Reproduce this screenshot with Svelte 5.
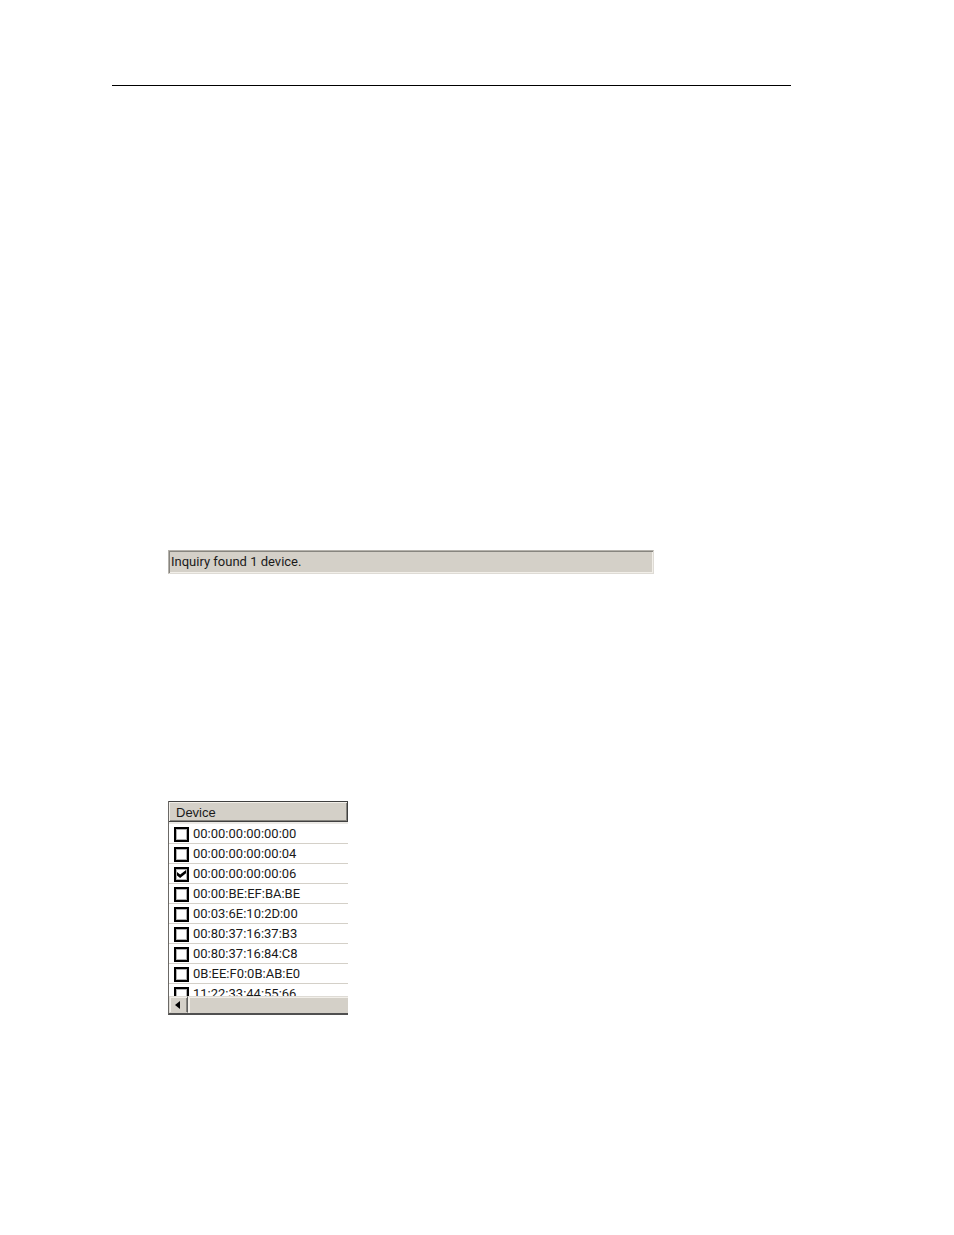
<script lang="ts">
	let devices = $state([
		{ address: '00:00:00:00:00:00', selected: false },
		{ address: '00:00:00:00:00:04', selected: false },
		{ address: '00:00:00:00:00:06', selected: true },
		{ address: '00:00:BE:EF:BA:BE', selected: false },
		{ address: '00:03:6E:10:2D:00', selected: false },
		{ address: '00:80:37:16:37:B3', selected: false },
		{ address: '00:80:37:16:84:C8', selected: false },
		{ address: '0B:EE:F0:0B:AB:E0', selected: false },
		{ address: '11:22:33:44:55:66', selected: false }
	]);
</script>

<main class="page">
	<hr class="rule" />

	<div class="content">
		<p class="status" role="status">Inquiry found 1 device.</p>

		<section class="device-list">
			<div class="viewport">
				<table>
					<thead>
						<tr><th scope="col">Device</th></tr>
					</thead>
					<tbody>
						{#each devices as device}
							<tr>
								<td>
									<label>
										<input type="checkbox" bind:checked={device.selected} />
										<span>{device.address}</span>
									</label>
								</td>
							</tr>
						{/each}
					</tbody>
				</table>
			</div>

			<div class="scrollbar">
				<button class="arrow" aria-label="Scroll left">
					<svg viewBox="0 0 5 8" width="5" height="8"><path d="M5 0v8L0 4z" /></svg>
				</button>
				<div class="thumb"></div>
			</div>
		</section>
	</div>
</main>

<style>
	:global(body) {
		margin: 0;
		background: #fff;
	}

	.page {
		padding: 85px 163px 220px 112px;
		font-family: Roboto, 'Liberation Sans', sans-serif;
		font-size: 13px;
		line-height: 16px;
		color: #1a1a1a;
	}

	.rule {
		height: 1px;
		margin: 0;
		border: 0;
		background: #000;
	}

	.content {
		display: flex;
		flex-direction: column;
		gap: 227px;
		padding: 464px 0 0 56px;
	}

	.status {
		box-sizing: border-box;
		width: 100%;
		max-width: 486px;
		height: 24px;
		margin: 0;
		padding: 1px 2px;
		background: #d4d0c8;
		border: 1px solid;
		border-color: #b5b2ac #dedbd5 #dedbd5 #b5b2ac;
		box-shadow: inset 1px 1px #87857f, inset -1px -1px #f2efe9;
		line-height: 20px;
	}

	.device-list {
		box-sizing: border-box;
		width: 100%;
		max-width: 180px;
		border-left: 1px solid #6b6966;
		border-bottom: 2px solid #505050;
	}

	.viewport {
		height: 195px;
		overflow: hidden;
	}

	table {
		width: 100%;
		border-collapse: separate;
		border-spacing: 0;
	}

	th {
		box-sizing: border-box;
		height: 21px;
		padding: 2px 7px 0;
		background: #d4d0c8;
		border: 1px solid #404040;
		border-left: 0;
		box-shadow: inset 1px 1px #f2efe9, inset -1px -1px #87857f;
		font-family: 'Liberation Sans', sans-serif;
		font-weight: 400;
		text-align: left;
	}

	td {
		box-sizing: border-box;
		height: 20px;
		padding: 0;
		border-bottom: 1px solid #d4d0c8;
	}

	tbody tr:first-child td {
		height: 22px;
		border-top: 2px solid #eceae6;
	}

	label {
		display: flex;
		align-items: center;
		gap: 4px;
		padding: 1px 0 0 5px;
	}

	input {
		appearance: none;
		display: grid;
		place-items: center;
		box-sizing: border-box;
		flex: none;
		width: 15px;
		height: 15px;
		margin: 0;
		background: #fff;
		border: 2px solid #000;
		box-shadow: inset 0 0 0 1px #b0b0b0;
	}

	input:checked::before {
		content: '';
		width: 9px;
		height: 8px;
		background: #000;
		clip-path: polygon(0 25%, 35% 55%, 100% 0, 100% 42%, 35% 100%, 0 70%);
	}

	.scrollbar {
		display: flex;
		height: 17px;
	}

	.arrow {
		display: grid;
		place-items: center;
		box-sizing: border-box;
		width: 19px;
		padding: 0 2px 0 0;
		background: #d4d0c8;
		border: 1px solid;
		border-color: #dedbd5 #606060 #d4d0c8 #dedbd5;
		box-shadow: inset 1px 1px #f2efe9, inset -1px 0 #87857f;
	}

	.thumb {
		flex: 1;
		background: #d4d0c8;
		border-top: 1px solid #dedbd5;
		box-shadow: inset 2px 1px #f2efe9;
	}
</style>
